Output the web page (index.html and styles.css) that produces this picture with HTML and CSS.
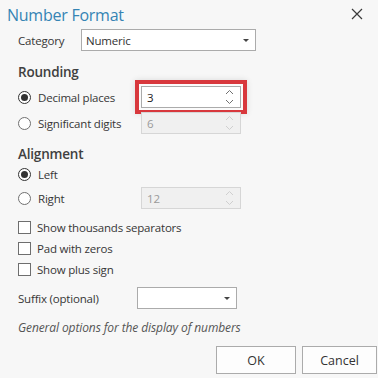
FILE: index.html
```html
<!DOCTYPE html>
<html lang="en">
<head>
    <meta charset="UTF-8">
    <title>Number Format</title>
    <link rel="stylesheet" href="styles.css">
</head>
<body>

<div class="dialog">

    <div class="header">
        <h1>Number Format</h1>
        <svg class="close" width="12" height="12" viewBox="0 0 12 12">
            <path d="M1 1 L11 11 M11 1 L1 11" stroke="#3a3a3a" stroke-width="1.2" fill="none"/>
        </svg>
    </div>

    <div class="body">

        <div class="row category">
            <span class="label">Category</span>
            <div class="select wide">
                <span>Numeric</span>
                <i class="caret"></i>
            </div>
        </div>

        <h2 class="section rounding">Rounding</h2>

        <div class="row option first">
            <label class="radio"><span class="dot checked"></span>Decimal places</label>
            <div class="spin highlight">
                <span>3</span>
                <svg class="arrows" width="9" height="16" viewBox="0 0 9 16">
                    <path d="M1 5 L4.5 1.5 L8 5 M1 11 L4.5 14.5 L8 11" stroke="#707070" stroke-width="1" fill="none"/>
                </svg>
            </div>
        </div>

        <div class="row option">
            <label class="radio"><span class="dot"></span>Significant digits</label>
            <div class="spin disabled">
                <span>6</span>
                <svg class="arrows" width="9" height="16" viewBox="0 0 9 16">
                    <path d="M1 5 L4.5 1.5 L8 5 M1 11 L4.5 14.5 L8 11" stroke="#cfcfcf" stroke-width="1" fill="none"/>
                </svg>
            </div>
        </div>

        <h2 class="section alignment">Alignment</h2>

        <div class="row option left">
            <label class="radio"><span class="dot checked"></span>Left</label>
        </div>

        <div class="row option right">
            <label class="radio"><span class="dot"></span>Right</label>
            <div class="spin disabled">
                <span>12</span>
                <svg class="arrows" width="9" height="16" viewBox="0 0 9 16">
                    <path d="M1 5 L4.5 1.5 L8 5 M1 11 L4.5 14.5 L8 11" stroke="#cfcfcf" stroke-width="1" fill="none"/>
                </svg>
            </div>
        </div>

        <ul class="checks">
            <li><span class="box"></span>Show thousands separators</li>
            <li><span class="box"></span>Pad with zeros</li>
            <li><span class="box"></span>Show plus sign</li>
        </ul>

        <div class="row suffix">
            <span class="label">Suffix (optional)</span>
            <div class="select narrow">
                <span></span>
                <i class="caret"></i>
            </div>
        </div>

        <p class="hint">General options for the display of numbers</p>

    </div>

    <div class="footer">
        <button class="btn ok">OK</button>
        <button class="btn cancel">Cancel</button>
    </div>

</div>

</body>
</html>
```

FILE: styles.css
```css
html, body, div, span, h1, h2, p, ul, li, label, button {
    margin: 0;
    padding: 0;
    border: 0;
    font: inherit;
}

ul {
    list-style: none;
}

body {
    background: #f7f7f7;
    color: #363636;
    font-family: "Open Sans", "Noto Sans", sans-serif;
    font-size: 11.5px;
    letter-spacing: -0.2px;
    width: 378px;
    height: 378px;
    overflow: hidden;
}

.dialog {
    display: flex;
    flex-direction: column;
    height: 378px;
}

/* title bar */

.header {
    display: flex;
    align-items: center;
    justify-content: space-between;
    height: 29px;
    padding: 0 15px 0 7px;
}

.header h1 {
    font-size: 16px;
    color: #3584b4;
    letter-spacing: -0.25px;
}

.close {
    margin-top: -1px;
}

/* content */

.body {
    display: flex;
    flex-direction: column;
    padding-left: 18px;
}

.row {
    display: flex;
    align-items: center;
}

.category {
    height: 22px;
}

.category .label {
    width: 63px;
}

.select {
    display: flex;
    align-items: center;
    justify-content: space-between;
    height: 22px;
    box-sizing: border-box;
    padding: 0 6px 0 4px;
    background: #fff;
    border: 1px solid #ababab;
    color: #333;
}

.select.wide {
    width: 175px;
}

.select.narrow {
    width: 100px;
}

.caret {
    width: 0;
    height: 0;
    border-left: 3px solid transparent;
    border-right: 3px solid transparent;
    border-top: 3px solid #444;
}

.section {
    font-size: 13.5px;
    font-weight: 600;
    color: #404040;
    letter-spacing: -0.2px;
    height: 20px;
    line-height: 20px;
}

.rounding {
    margin-top: 11px;
}

.alignment {
    margin-top: 8px;
}

.option {
    height: 26px;
}

.option.first {
    margin-top: 2px;
}

.option.left {
    height: 20px;
}

.option.right {
    height: 22px;
    margin-top: 3px;
}

.radio {
    display: flex;
    align-items: center;
    width: 123px;
}

.dot {
    position: relative;
    width: 13px;
    height: 13px;
    box-sizing: border-box;
    border: 1px solid #707070;
    border-radius: 50%;
    background: #fff;
    margin-right: 7px;
}

.dot.checked {
    border-color: #333;
}

.dot.checked::after {
    content: "";
    position: absolute;
    left: 2px;
    top: 2px;
    width: 7px;
    height: 7px;
    border-radius: 50%;
    background: #333;
}

.spin {
    display: flex;
    align-items: center;
    justify-content: space-between;
    width: 100px;
    height: 22px;
    box-sizing: border-box;
    padding: 0 6px 0 5px;
    background: #fff;
    border: 1px solid #ababab;
    color: #222;
}

.spin.highlight {
    box-shadow: 0 0 0 2px #fbfbfb, 0 0 0 6px #d8383d, 0 0 6px 6px rgba(0, 0, 0, 0.12);
}

.spin.disabled {
    background: #f0f0f0;
    border-color: #d6d6d6;
    color: #9a9a9a;
}

.checks {
    margin-top: 8px;
}

.checks li {
    display: flex;
    align-items: center;
    height: 21px;
}

.box {
    width: 13px;
    height: 13px;
    box-sizing: border-box;
    border: 1px solid #6e6e6e;
    background: #fff;
    margin-right: 6px;
}

.suffix {
    margin-top: 7px;
}

.suffix .label {
    width: 119px;
}

.hint {
    margin-top: 9px;
    height: 20px;
    line-height: 20px;
    font-size: 12px;
    letter-spacing: -0.1px;
    font-style: italic;
    color: #555;
}

/* buttons */

.footer {
    display: flex;
    justify-content: flex-end;
    gap: 6px;
    margin-top: 8px;
    padding-right: 1px;
}

.btn {
    height: 28px;
    background: #fdfdfd;
    border: 1px solid #ababab;
    color: #333;
    font-size: 12.5px;
}

.btn.ok {
    width: 80px;
}

.btn.cancel {
    width: 75px;
}
```
